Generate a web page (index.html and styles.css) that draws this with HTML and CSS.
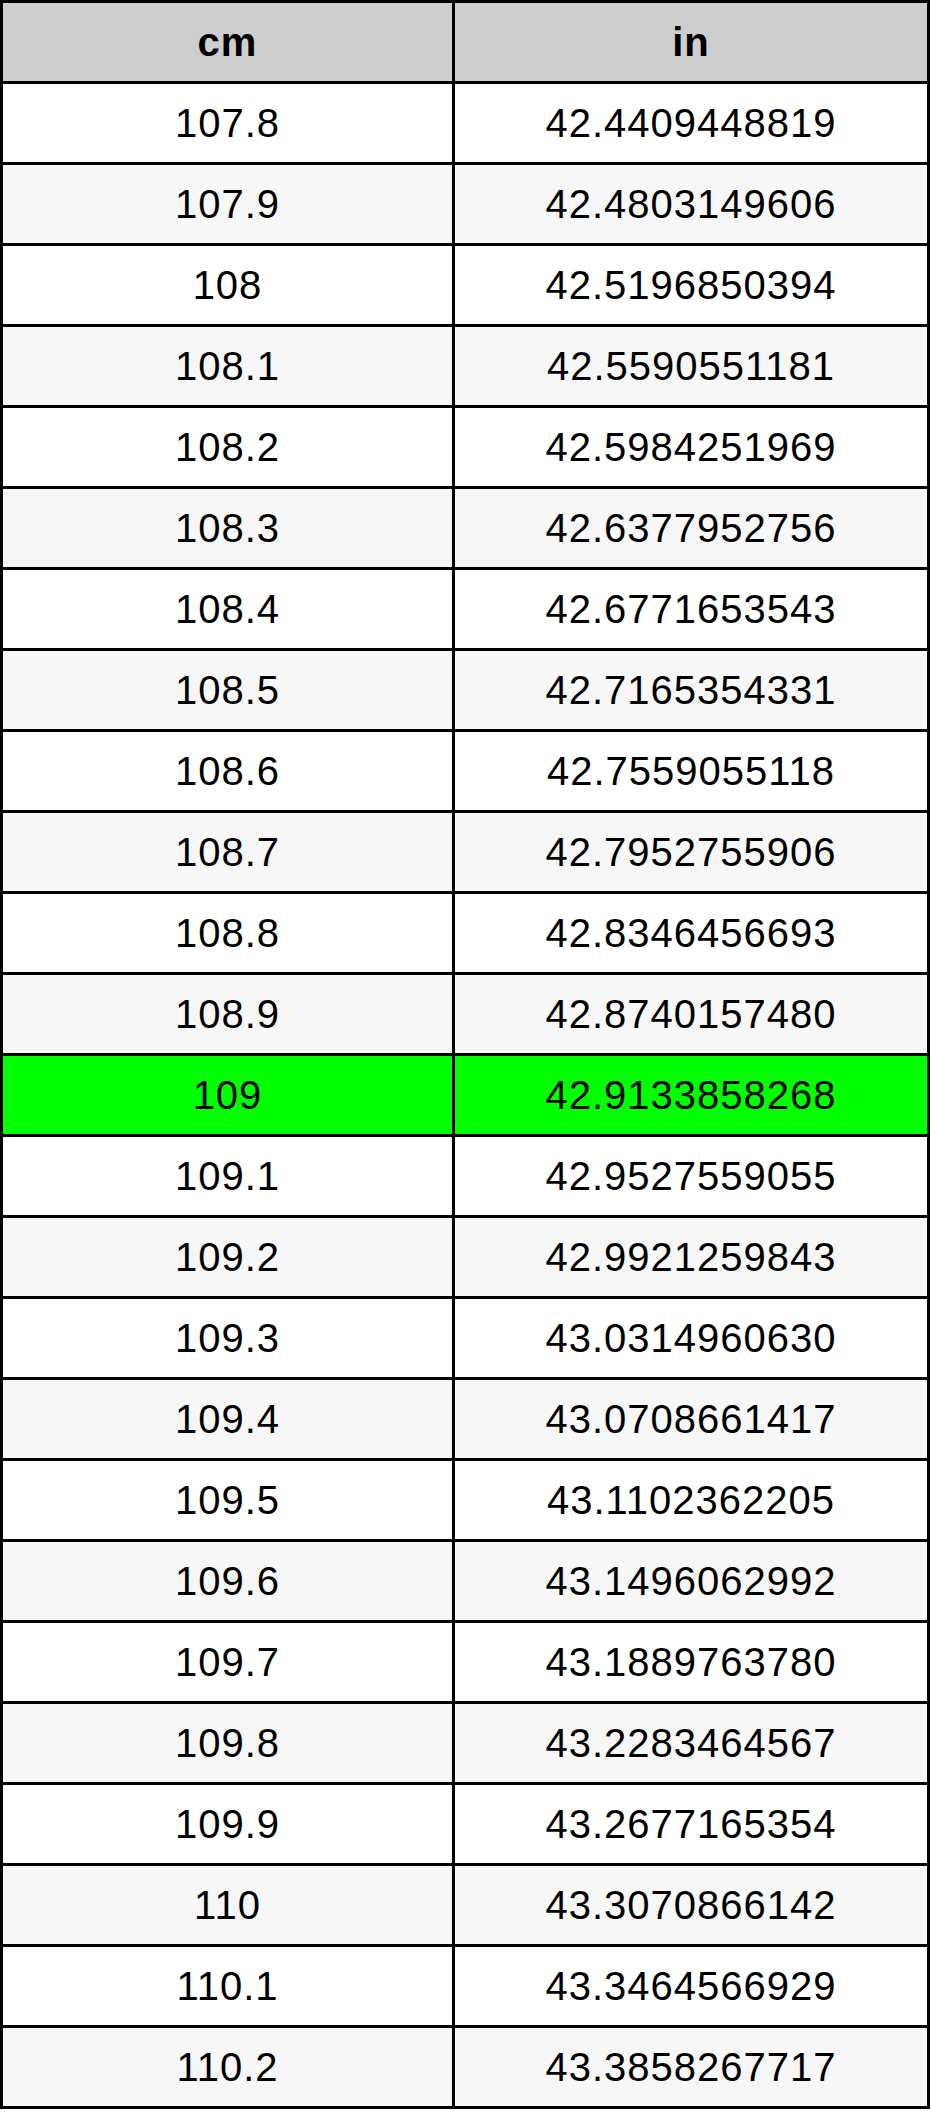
FILE: index.html
```html
<!DOCTYPE html>
<html>
<head>
<meta charset="utf-8">
<link rel="stylesheet" href="styles.css">
</head>
<body>
<table class="conv">
<thead>
<tr><th class="c1">cm</th><th class="c2">in</th></tr>
</thead>
<tbody>
<tr><td>107.8</td><td>42.4409448819</td></tr>
<tr class="alt"><td>107.9</td><td>42.4803149606</td></tr>
<tr><td>108</td><td>42.5196850394</td></tr>
<tr class="alt"><td>108.1</td><td>42.5590551181</td></tr>
<tr><td>108.2</td><td>42.5984251969</td></tr>
<tr class="alt"><td>108.3</td><td>42.6377952756</td></tr>
<tr><td>108.4</td><td>42.6771653543</td></tr>
<tr class="alt"><td>108.5</td><td>42.7165354331</td></tr>
<tr><td>108.6</td><td>42.7559055118</td></tr>
<tr class="alt"><td>108.7</td><td>42.7952755906</td></tr>
<tr><td>108.8</td><td>42.8346456693</td></tr>
<tr class="alt"><td>108.9</td><td>42.8740157480</td></tr>
<tr class="hl"><td>109</td><td>42.9133858268</td></tr>
<tr><td>109.1</td><td>42.9527559055</td></tr>
<tr class="alt"><td>109.2</td><td>42.9921259843</td></tr>
<tr><td>109.3</td><td>43.0314960630</td></tr>
<tr class="alt"><td>109.4</td><td>43.0708661417</td></tr>
<tr><td>109.5</td><td>43.1102362205</td></tr>
<tr class="alt"><td>109.6</td><td>43.1496062992</td></tr>
<tr><td>109.7</td><td>43.1889763780</td></tr>
<tr class="alt"><td>109.8</td><td>43.2283464567</td></tr>
<tr><td>109.9</td><td>43.2677165354</td></tr>
<tr class="alt"><td>110</td><td>43.3070866142</td></tr>
<tr><td>110.1</td><td>43.3464566929</td></tr>
<tr class="alt"><td>110.2</td><td>43.3858267717</td></tr>
</tbody>
</table>
</body>
</html>
```
FILE: styles.css
```css
html, body {
  margin: 0;
  padding: 0;
  background: #ffffff;
}
.conv {
  width: 930px;
  border-collapse: collapse;
  table-layout: fixed;
  font-family: "Liberation Sans", Arial, sans-serif;
  font-size: 40px;
  letter-spacing: 1px;
  color: #000;
}
.conv th, .conv td {
  border: 3px solid #000;
  height: 78px;
  padding: 0;
  text-align: center;
  vertical-align: middle;
  line-height: 1;
}
.conv th {
  background: #cecece;
  font-weight: bold;
}
.conv .c1 { width: 449px; }
.conv .c2 { width: 472px; }
.conv tr.alt td { background: #f7f7f7; }
.conv tr.hl td { background: #00ff00; }
```
